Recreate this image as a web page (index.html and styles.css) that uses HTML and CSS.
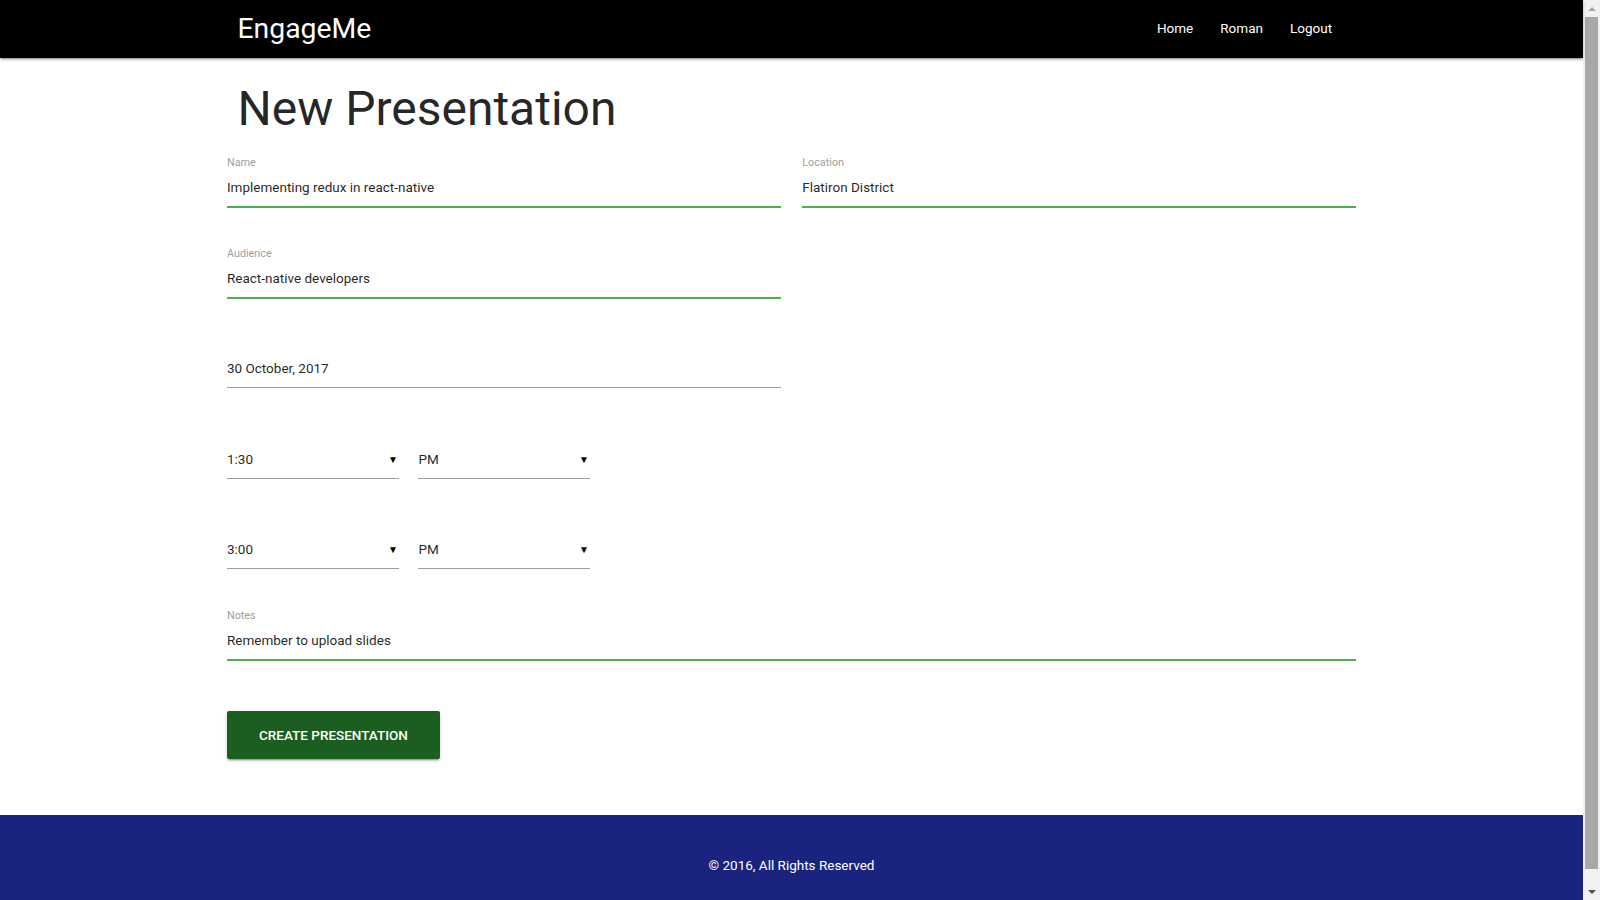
FILE: index.html
```html
<!DOCTYPE html>
<html lang="en">
<head>
<meta charset="utf-8">
<title>EngageMe - New Presentation</title>
<link rel="stylesheet" href="styles.css">
</head>
<body>
<div class="app">
  <nav class="nav">
    <div class="nav-inner">
      <a class="brand" href="#">EngageMe</a>
      <ul class="links">
        <li><a href="#">Home</a></li>
        <li><a href="#">Roman</a></li>
        <li><a href="#">Logout</a></li>
      </ul>
    </div>
  </nav>
  <main class="container">
    <h2 class="title">New Presentation</h2>
    <form class="form">
      <div class="row two">
        <div class="field valid"><label>Name</label><div class="value">Implementing redux in react-native</div></div>
        <div class="field valid"><label>Location</label><div class="value">Flatiron District</div></div>
      </div>
      <div class="row two">
        <div class="field valid"><label>Audience</label><div class="value">React-native developers</div></div>
      </div>
      <div class="row two">
        <div class="field"><label></label><div class="value">30 October, 2017</div></div>
      </div>
      <div class="row times">
        <div class="field select"><label></label><div class="value">1:30<span class="caret">▼</span></div></div>
        <div class="field select"><label></label><div class="value">PM<span class="caret">▼</span></div></div>
      </div>
      <div class="row times">
        <div class="field select"><label></label><div class="value">3:00<span class="caret">▼</span></div></div>
        <div class="field select"><label></label><div class="value">PM<span class="caret">▼</span></div></div>
      </div>
      <div class="row last">
        <div class="field valid"><label>Notes</label><div class="value">Remember to upload slides</div></div>
      </div>
      <div class="actions">
        <button type="button" class="btn">Create Presentation</button>
      </div>
    </form>
  </main>
  <footer class="footer">
    <p>© 2016, All Rights Reserved</p>
  </footer>
</div>
<aside class="scrollbar" aria-hidden="true">
  <span class="arrow up"></span>
  <span class="track"><span class="thumb"></span></span>
  <span class="arrow down"></span>
</aside>
</body>
</html>
```

FILE: styles.css
```css
html, body {
  margin: 0;
  padding: 0;
}
body {
  font-family: Roboto, "Liberation Sans", sans-serif;
  color: rgba(0, 0, 0, 0.87);
  background: #fff;
  display: grid;
  grid-template-columns: 1fr 17px;
}
.app {
  min-width: 0;
}
/* window scrollbar */
.scrollbar {
  position: sticky;
  top: 0;
  height: 100vh;
  background: #f1f1f1;
  display: flex;
  flex-direction: column;
  align-items: center;
}
.scrollbar .arrow {
  height: 17px;
  width: 17px;
  display: flex;
  align-items: center;
  justify-content: center;
  flex: none;
}
.scrollbar .arrow::before {
  content: "";
  width: 0;
  height: 0;
  border-left: 4px solid transparent;
  border-right: 4px solid transparent;
}
.scrollbar .up::before {
  border-bottom: 4px solid #a3a3a3;
}
.scrollbar .down::before {
  border-top: 4px solid #505050;
}
.scrollbar .track {
  flex: 1;
  width: 100%;
  display: flex;
  justify-content: center;
}
.scrollbar .thumb {
  width: 13px;
  height: 98.4%;
  background: #a8a8a8;
}
.nav {
  background: #000;
  height: 57.6px;
  box-shadow: 0 2px 2px 0 rgba(0,0,0,0.14), 0 1px 5px 0 rgba(0,0,0,0.12), 0 3px 1px -2px rgba(0,0,0,0.2);
  position: relative;
  z-index: 2;
}
.nav-inner {
  width: 70%;
  margin: 0 auto;
  height: 57.6px;
  display: flex;
  align-items: center;
  justify-content: space-between;
}
.brand {
  color: #fff;
  text-decoration: none;
  font-size: 28.35px;
  line-height: 57.6px;
}
.links {
  list-style: none;
  margin: 0;
  padding: 0;
  display: flex;
}
.links a {
  display: block;
  color: #fff;
  text-decoration: none;
  font-size: 13.5px;
  font-weight: 400;
  padding: 0 13.5px;
  line-height: 57.6px;
}
.container {
  width: 70%;
  margin: 0 auto;
}
.title {
  font-size: 48px;
  font-weight: 400;
  line-height: 53px;
  margin: 24px 0 0;
}
.form {
  margin: 0 -10.5px;
  padding-top: 20.4px;
}
.row {
  display: grid;
  grid-template-columns: 1fr;
  margin-bottom: 38.6px;
}
.row.last {
  margin-bottom: 0;
}
.row.two {
  grid-template-columns: 1fr 1fr;
  column-gap: 21.5px;
}
.row.times {
  grid-template-columns: 172px 171.5px;
  column-gap: 19.5px;
}
.field label {
  display: block;
  height: 14px;
  padding-top: 1px;
  font-size: 10.8px;
  line-height: 14px;
  color: #9e9e9e;
}
.field .value {
  height: 35px;
  line-height: 35px;
  padding-bottom: 1px;
  font-size: 13.5px;
  border-bottom: 1px solid #9e9e9e;
  display: flex;
  justify-content: space-between;
  align-items: center;
}
.field.valid .value {
  border-bottom-color: #4caf50;
  box-shadow: 0 1px 0 0 #4caf50;
}
.caret {
  font-size: 10px;
  color: #000;
  margin-right: 1px;
}
.actions {
  padding-top: 51px;
  padding-bottom: 56px;
}
.btn {
  display: inline-block;
  height: 48px;
  width: 213px;
  padding: 0;
  border: none;
  border-radius: 2px;
  background: #1b5e20;
  color: #fff;
  font-family: Roboto, "Liberation Sans", sans-serif;
  font-size: 13.5px;
  font-weight: 500;
  text-transform: uppercase;
  box-shadow: 0 2px 2px 0 rgba(0,0,0,0.14), 0 1px 5px 0 rgba(0,0,0,0.12), 0 3px 1px -2px rgba(0,0,0,0.2);
  cursor: pointer;
}
.footer {
  background: #1a237e;
  height: 99px;
  display: flex;
  align-items: center;
  justify-content: center;
}
.footer p {
  margin: 0;
  color: #fff;
  font-size: 13.5px;
  font-weight: 400;
  padding-top: 1px;
}
```
